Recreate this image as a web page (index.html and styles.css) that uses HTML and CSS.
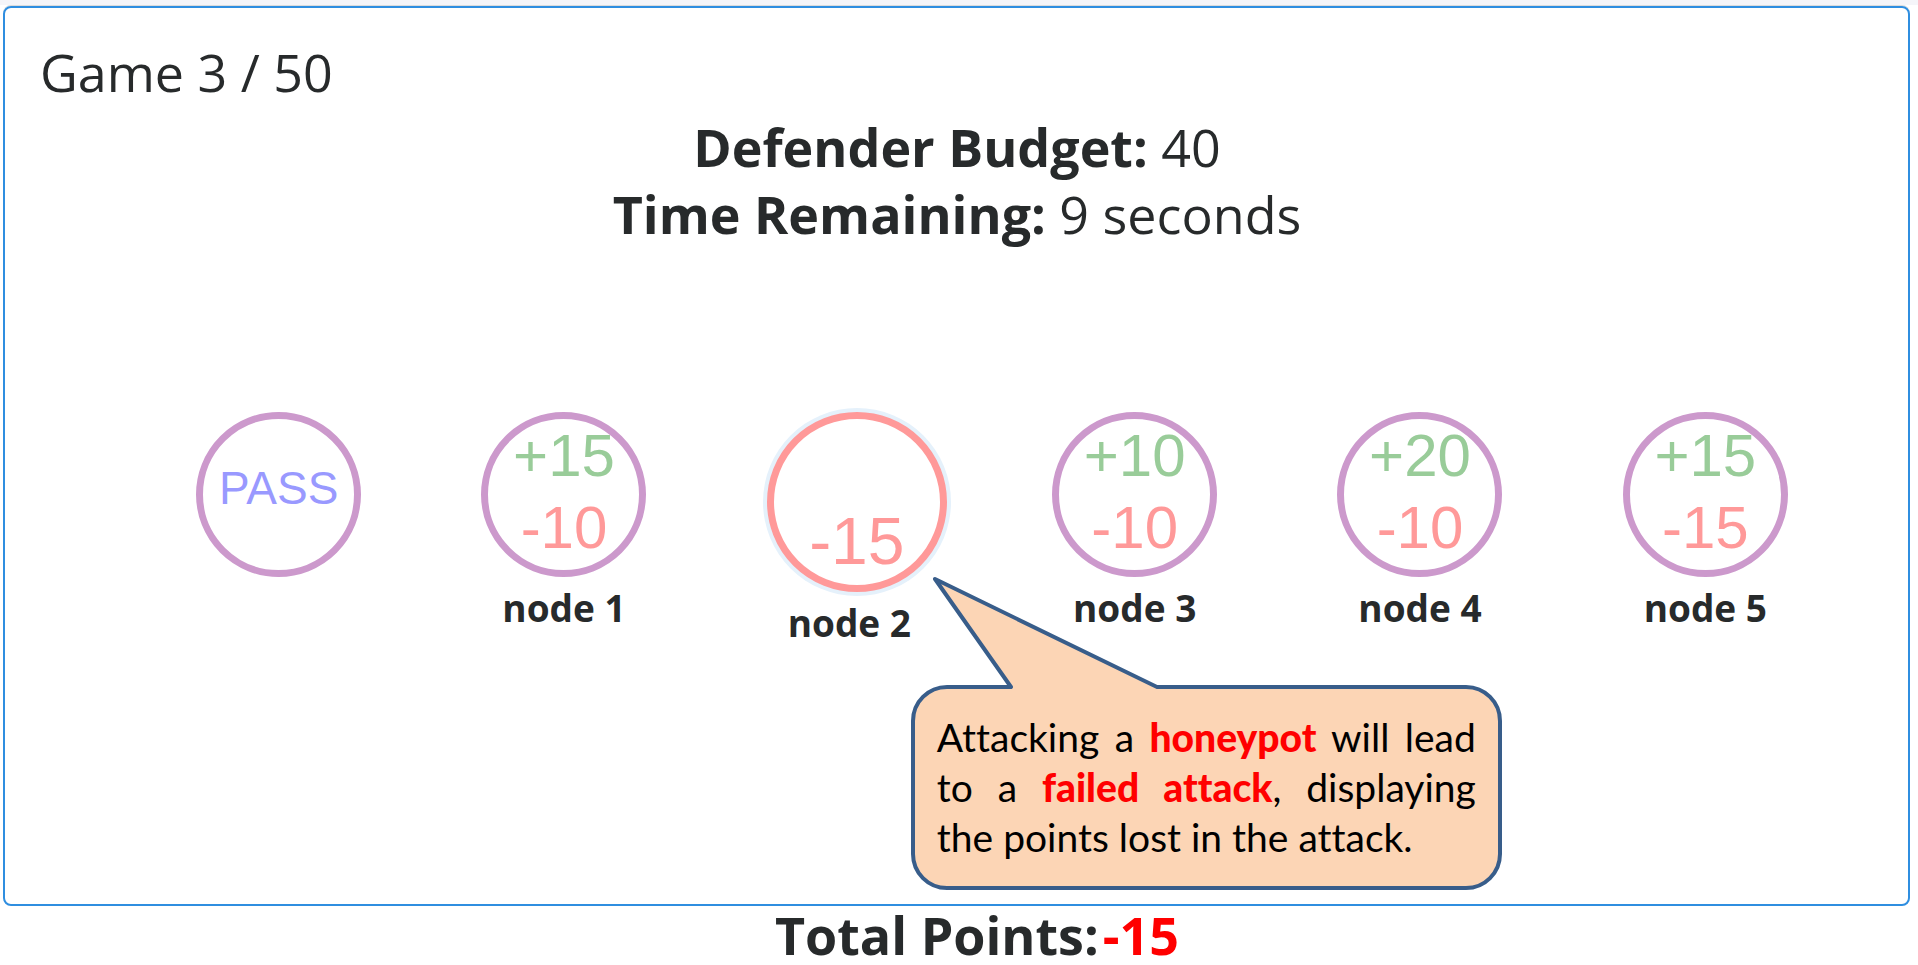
FILE: index.html
```html
<!DOCTYPE html>
<html lang="en">
<head>
<meta charset="utf-8">
<title>Game 3 / 50</title>
<link rel="stylesheet" href="styles.css">
</head>
<body>
<main class="card">
  <p class="round">Game 3 / 50</p>
  <div class="status">
    <p><strong>Defender Budget:</strong> 40</p>
    <p><strong>Time Remaining:</strong> 9 seconds</p>
  </div>
  <div class="nodes">
    <div class="node">
      <button class="circle pass" type="button">PASS</button>
    </div>
    <div class="node">
      <button class="circle" type="button" aria-labelledby="n1"><span class="gain">+15</span><span class="loss">-10</span></button>
      <span class="label" id="n1">node 1</span>
    </div>
    <div class="node">
      <button class="circle attacked" type="button" aria-labelledby="n2"><span class="loss">-15</span></button>
      <span class="label" id="n2">node 2</span>
      <div class="callout" role="note">
        <svg class="tail" viewBox="0 0 232 116" aria-hidden="true">
          <path class="tail-fill" d="M4 4 L80 112 V116 H226 V112 Z"/>
          <path class="tail-line" d="M80 112 L4 4 L226 112"/>
        </svg>
        <p>Attacking a <em>honeypot</em> will lead to a <em>failed attack</em>, displaying the points lost in the attack.</p>
      </div>
    </div>
    <div class="node">
      <button class="circle" type="button" aria-labelledby="n3"><span class="gain">+10</span><span class="loss">-10</span></button>
      <span class="label" id="n3">node 3</span>
    </div>
    <div class="node">
      <button class="circle" type="button" aria-labelledby="n4"><span class="gain">+20</span><span class="loss">-10</span></button>
      <span class="label" id="n4">node 4</span>
    </div>
    <div class="node">
      <button class="circle" type="button" aria-labelledby="n5"><span class="gain">+15</span><span class="loss">-15</span></button>
      <span class="label" id="n5">node 5</span>
    </div>
  </div>
</main>
<p class="total">Total Points:<span class="score">-15</span></p>
</body>
</html>
```
FILE: styles.css
```css
* {
  box-sizing: border-box;
}

body {
  margin: 0;
  min-height: 100vh;
  display: flex;
  flex-direction: column;
  border-top: 5px solid #f5f5f9;
  background: #fff;
  color: #272a2b;
  font-family: "Open Sans", "Noto Sans", sans-serif;
  font-size: 52px;
  line-height: 67px;
}

p {
  margin: 0;
}

.card {
  flex: 1;
  margin: 1px 8px 0 3px;
  padding: 30px 60px 0 35px;
  border: 2px solid #2f8ee0;
  border-radius: 8px;
  box-shadow: 0 -1px 0 #dcdcdc;
}

.status {
  margin: 8px 0 165px;
  padding-left: 26px;
  text-align: center;
}

.status strong {
  font-weight: 700;
}

.nodes {
  display: grid;
  grid-template-columns: repeat(6, 1fr);
  justify-items: center;
  align-items: start;
  padding-left: 96px;
}

.node {
  position: relative;
  width: 165px;
  display: flex;
  flex-direction: column;
  align-items: center;
}

.circle {
  width: 165px;
  height: 165px;
  flex: none;
  display: flex;
  flex-direction: column;
  align-items: center;
  justify-content: flex-end;
  padding: 0 0 6px;
  border: 7px solid #cc99cc;
  border-radius: 50%;
  background: #fff;
  font-family: "Liberation Sans", Arial, sans-serif;
  font-size: 60px;
  line-height: 72px;
  cursor: pointer;
}

.pass {
  justify-content: center;
  padding-bottom: 14px;
  color: #9999ff;
  font-size: 46px;
}

.gain {
  color: #99cc99;
}

.loss {
  color: #ff9999;
}

.attacked {
  align-self: flex-start;
  width: 180px;
  height: 180px;
  padding-bottom: 8px;
  border-color: #ff9999;
  box-shadow: 0 0 0 4px #e5f1fb;
  font-size: 66px;
}

.label {
  margin-top: 6px;
  font-size: 37px;
  font-weight: 700;
  line-height: 50px;
}

.callout {
  position: absolute;
  top: 273px;
  left: 144px;
  width: 591px;
  padding: 23px 22px 24px;
  border: 4px solid #385d8a;
  border-radius: 36px;
  background: #fcd5b5;
  color: #000;
  font-family: Lato, sans-serif;
  font-size: 39px;
  font-variant-ligatures: none;
  line-height: 50px;
  text-align: justify;
}

.callout em {
  color: #f00;
  font-style: normal;
  font-weight: 900;
}

.tail {
  position: absolute;
  left: 16px;
  bottom: 100%;
  margin-bottom: -2px;
  width: 232px;
  height: 116px;
}

.tail-fill {
  fill: #fcd5b5;
}

.tail-line {
  fill: none;
  stroke: #385d8a;
  stroke-width: 4;
  stroke-linejoin: round;
  stroke-linecap: round;
}

.total {
  padding: 0 0 1px 36px;
  text-align: center;
  font-weight: 700;
  line-height: 58px;
}

.score {
  margin-left: 4px;
  color: #f00;
}
```
